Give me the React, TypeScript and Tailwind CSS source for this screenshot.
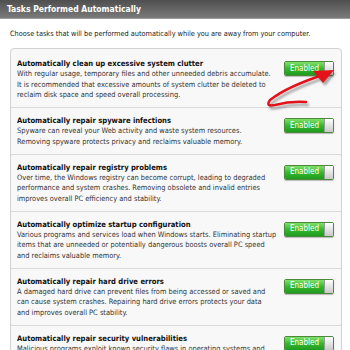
import React from 'react';

const tasks = [
  {
    title: 'Automatically clean up excessive system clutter',
    lines: [
      'With regular usage, temporary files and other unneeded debris accumulate.',
      'It is recommended that excessive amounts of system clutter be deleted to',
      'reclaim disk space and speed overall processing.',
    ],
  },
  {
    title: 'Automatically repair spyware infections',
    lines: [
      'Spyware can reveal your Web activity and waste system resources.',
      'Removing spyware protects privacy and reclaims valuable memory.',
    ],
  },
  {
    title: 'Automatically repair registry problems',
    lines: [
      'Over time, the Windows registry can become corrupt, leading to degraded',
      'performance and system crashes. Removing obsolete and invalid entries',
      'improves overall PC efficiency and stability.',
    ],
  },
  {
    title: 'Automatically optimize startup configuration',
    lines: [
      'Various programs and services load when Windows starts. Eliminating startup',
      'items that are unneeded or potentially dangerous boosts overall PC speed',
      'and reclaims valuable memory.',
    ],
  },
  {
    title: 'Automatically repair hard drive errors',
    lines: [
      'A damaged hard drive can prevent files from being accessed or saved and',
      'can cause system crashes. Repairing hard drive errors protects your data',
      'and improves overall PC stability.',
    ],
  },
  {
    title: 'Automatically repair security vulnerabilities',
    lines: [
      'Malicious programs exploit known security flaws in operating systems and',
      'applications. Repairing these vulnerabilities keeps your PC protected.',
    ],
  },
];

function Toggle() {
  return (
    <div className="flex h-[15px] w-[50px] shrink-0 overflow-hidden rounded-[2px] border border-[#4a8a3a] shadow-[0_1px_1px_rgba(0,0,0,0.25)]">
      <div className="flex flex-1 items-center justify-center bg-gradient-to-b from-[#7ee06a] via-[#35b82e] to-[#1f9a1f] text-[8px] leading-none text-white">
        Enabled
      </div>
      <div className="w-[9px] border-l border-[#9a9a9a] bg-gradient-to-b from-[#ffffff] to-[#c9c9c9]" />
    </div>
  );
}

function Arrow() {
  return (
    <svg className="pointer-events-none absolute left-0 top-0" width="350" height="350" viewBox="0 0 350 350">
      <defs>
        <filter id="blur" x="-20%" y="-20%" width="140%" height="140%">
          <feGaussianBlur stdDeviation="1.2" />
        </filter>
      </defs>
      <g transform="translate(2 3)" filter="url(#blur)" opacity="0.45">
        <path d="M306 102 Q290 101 275 105 Q265 107 270 100 Q288 86 326 74" fill="none" stroke="#444" strokeWidth="2.5" strokeLinecap="round" />
        <polygon points="334,70 313,71 323,83" fill="#444" />
      </g>
      <path d="M306 102 Q290 101 275 105 Q265 107 270 100 Q288 86 326 74" fill="none" stroke="#e3121b" strokeWidth="2.5" strokeLinecap="round" />
      <polygon points="334,70 313,71 323,83" fill="#e3121b" />
    </svg>
  );
}

export default function App() {
  return (
    <div className="relative h-[350px] w-[350px] overflow-hidden bg-white font-['DejaVu_Sans_Condensed','Liberation_Sans',sans-serif]">
      <div className="flex h-[19px] items-center border-b border-[#9c9c9c] bg-gradient-to-b from-[#4f4f4f] to-[#7a7a7a] pl-[7px] text-[8.5px] font-bold text-white">
        Tasks Performed Automatically
      </div>

      <p className="ml-[10px] mt-[10px] text-[7.3px] leading-[10px] text-[#222]">
        Choose tasks that will be performed automatically while you are away from your computer.
      </p>

      <div className="ml-[10px] mr-[8px] mt-[9px] rounded-[4px] border border-[#d2d2d2] bg-[#f8f8f8] pt-[2px]">
        {tasks.map((t, i) => (
          <div
            key={t.title}
            className={`flex gap-2 pb-[6.5px] pl-[6px] pr-[7px] pt-[7px] ${i > 0 ? 'border-t border-[#dadada]' : ''}`}
          >
            <div className="min-w-0 flex-1 whitespace-nowrap">
              <div className="text-[7.6px] font-bold leading-[11px] text-[#111]">{t.title}</div>
              {t.lines.map((l) => (
                <div key={l} className="text-[7.4px] leading-[10.5px] text-[#333]">
                  {l}
                </div>
              ))}
            </div>
            <div className="shrink-0 pt-[3px]">
              <Toggle />
            </div>
          </div>
        ))}
      </div>

      <Arrow />
    </div>
  );
}
